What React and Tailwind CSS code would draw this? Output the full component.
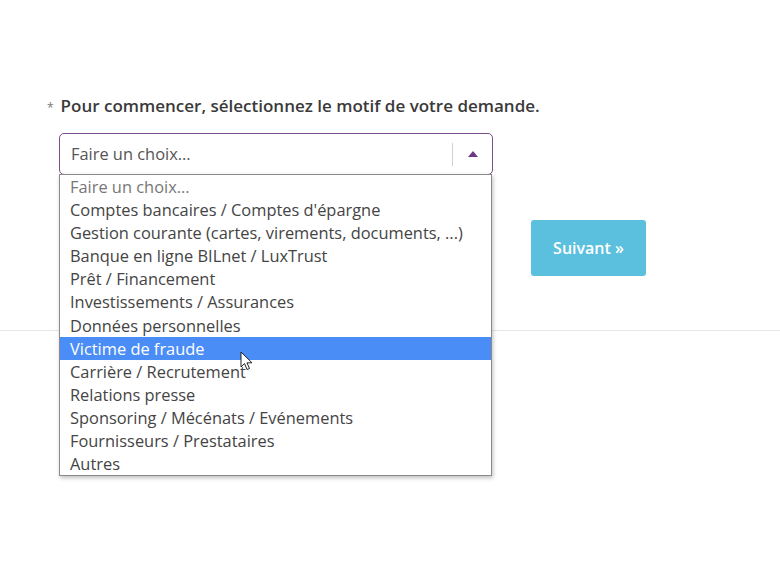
import React from 'react';

const options = [
  'Faire un choix...',
  'Comptes bancaires / Comptes d\'épargne',
  'Gestion courante (cartes, virements, documents, ...)',
  'Banque en ligne BILnet / LuxTrust',
  'Prêt / Financement',
  'Investissements / Assurances',
  'Données personnelles',
  'Victime de fraude',
  'Carrière / Recrutement',
  'Relations presse',
  'Sponsoring / Mécénats / Evénements',
  'Fournisseurs / Prestataires',
  'Autres',
];

const Cursor = () => (
  <svg className="absolute z-20 left-[240px] top-[351px]" width="14" height="21" viewBox="0 0 14 21">
    <path d="M1 1 L1 16 L4.5 12.5 L7 18.5 L9.5 17.5 L7 11.8 L12 11.8 Z" fill="#fff" stroke="#222" strokeWidth="1" strokeLinejoin="round" />
  </svg>
);

const App = () => {
  const selected = 7;

  return (
    <div className="relative w-[780px] h-[573px] bg-white overflow-hidden font-['Open_Sans',sans-serif]">
      <div className="pt-[94px]">
        <div className="flex items-baseline pl-[47px] text-[#3a3a3a]">
          <span className="text-[12px] text-[#777] mr-[7px]">*</span>
          <span className="text-[17px] leading-[24px] font-semibold">Pour commencer, sélectionnez le motif de votre demande.</span>
        </div>

        <div className="relative ml-[59px] mt-[15px] w-[434px]">
          <div className="flex items-center h-[42px] border border-[#7a4f8c] rounded-[5px] bg-white">
            <span className="flex-1 pl-[11px] text-[16.4px] text-[#555]">Faire un choix...</span>
            <span className="w-px h-[23px] bg-[#d0d0d0]" />
            <span className="w-[39px] flex justify-center">
              <svg width="10" height="6" viewBox="0 0 10 6">
                <path d="M0 6 L5 0 L10 6 Z" fill="#6b3a86" />
              </svg>
            </span>
          </div>

          <ul className="absolute left-0 top-[41px] z-10 w-[433px] border border-[#8a8a8a] bg-white shadow-[1px_2px_4px_rgba(0,0,0,0.25)]">
            {options.map((o, i) => (
              <li
                key={o}
                className={
                  'pl-[10px] text-[16.4px] leading-[23.1px] ' +
                  (i === selected ? 'bg-[#4a8df6] text-white' : i === 0 ? 'text-[#777]' : 'text-[#444]')
                }
              >
                {o}
              </li>
            ))}
          </ul>
        </div>

        <div className="pl-[531px] mt-[45px]">
          <button className="w-[115px] h-[56px] rounded-[3px] bg-[#5bc0de] text-white text-[16px] font-semibold">
            Suivant »
          </button>
        </div>

        <div className="mt-[54px] h-px bg-[#e6e6e6]" />
      </div>
      <Cursor />
    </div>
  );
};

export default App;
